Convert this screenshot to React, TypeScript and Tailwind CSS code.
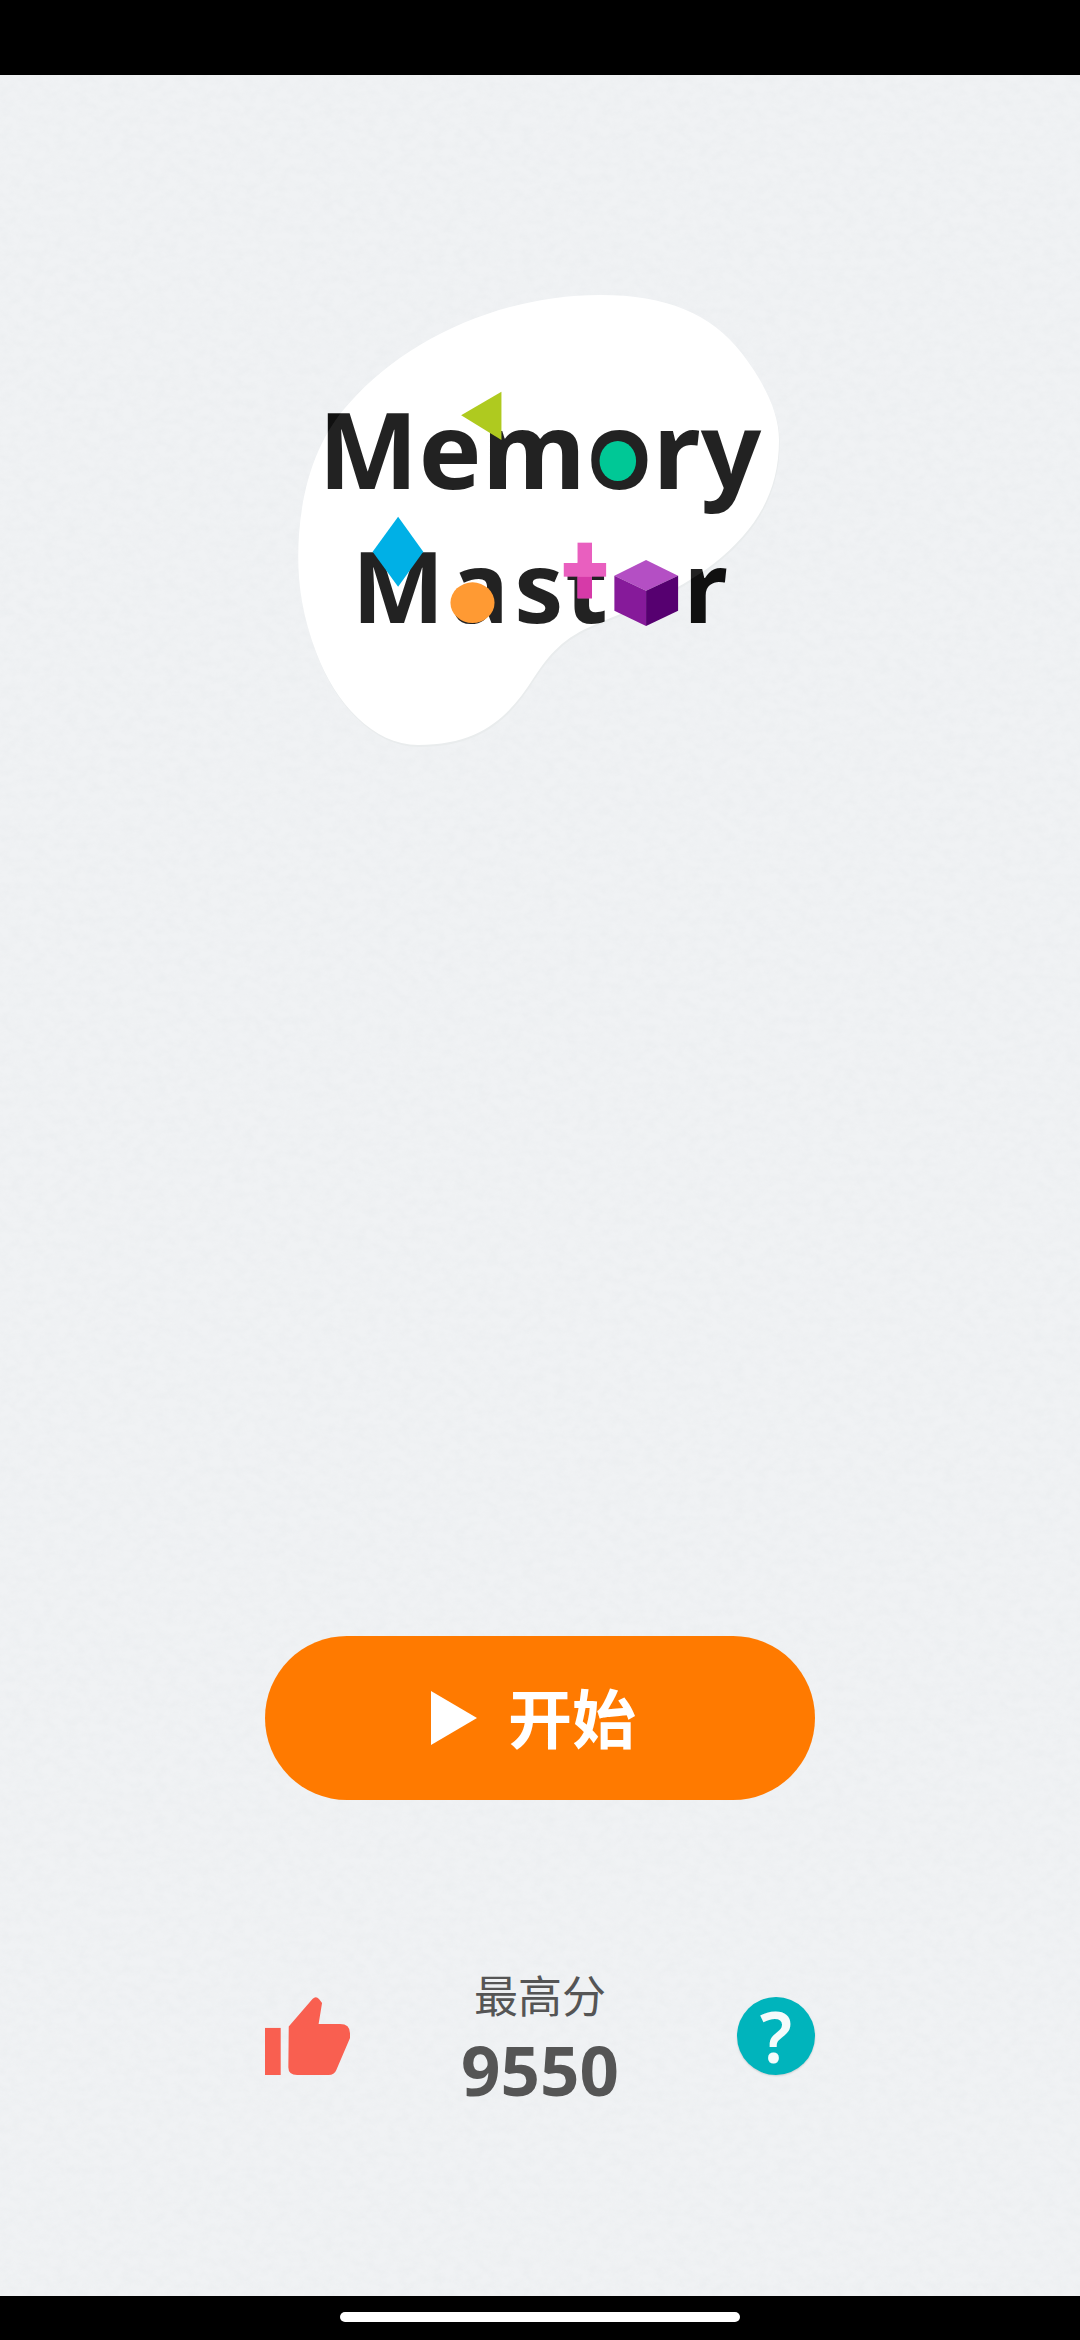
export default function App() {
  const blob =
    "M960,75 C1150,75 1280,130 1370,250 C1440,345 1478,430 1478,510 C1478,670 1410,780 1290,880 C1180,970 1020,1030 930,1070 C840,1110 800,1170 765,1225 C700,1330 620,1425 430,1425 C300,1425 190,1300 135,1150 C95,1040 82,950 82,860 C82,680 130,510 230,400 C400,200 680,75 960,75 Z";
  return (
    <div className="relative flex h-[2340px] w-[1080px] flex-col overflow-hidden bg-black font-['Noto_Sans','Noto_Sans_CJK_SC',sans-serif]">
      <div className="h-[75px] shrink-0 bg-black" />
      <main className="relative flex flex-1 flex-col items-center bg-[#f0f2f4]">
        <svg className="absolute inset-0 h-full w-full" aria-hidden="true">
          <filter id="paper">
            <feTurbulence type="fractalNoise" baseFrequency="0.09 0.12" numOctaves="3" seed="7" />
            <feColorMatrix values="0 0 0 0 0.55  0 0 0 0 0.6  0 0 0 0 0.62  0.6 0 0 0 -0.2" />
          </filter>
          <rect width="100%" height="100%" filter="url(#paper)" opacity="0.25" />
        </svg>

        <div className="relative mt-[195px] h-[500px] w-[540px] shrink-0">
          <svg viewBox="0 0 1568 1500" preserveAspectRatio="none" className="absolute inset-0 h-full w-full">
            <path d={blob} fill="#e9eced" transform="translate(2 6)" />
            <path d={blob} fill="#ffffff" />
          </svg>
          <div className="absolute left-0 top-[116px] w-full text-center text-[106px] font-bold leading-[124px] tracking-[0.5px] text-[#101010]">
            Memory
          </div>
          <div className="absolute left-0 top-[259px] w-full pl-[5px] text-center text-[98px] font-bold leading-[112px] tracking-[5.5px] text-[#101010]">
            Ma<span className="tracking-[2px]">s</span>
            <span className="tracking-[9px]">t</span>
            <span className="text-transparent">o</span>r
          </div>
          <svg viewBox="0 0 1568 1500" preserveAspectRatio="none" className="absolute inset-0 h-full w-full">
            <path d={blob} fill="#ffffff" opacity="0.08" />
            <polygon points="672,365 555,436 672,510" fill="#afca1f" />
            <ellipse cx="1010" cy="573" rx="53" ry="60" fill="#00c896" />
            <polygon points="372,740 445,845 372,950 298,845" fill="#00b0e6" />
            <ellipse cx="588" cy="998" rx="64" ry="61" fill="#ff9a33" />
            <rect x="893" y="818" width="42" height="167" fill="#e95fbf" />
            <rect x="893" y="920" width="42" height="65" fill="#d63aa8" />
            <rect x="853" y="879" width="123" height="41" fill="#e95fbf" />
            <polygon points="1092,870 1185,917 1092,962 1000,917" fill="#b44fc4" />
            <polygon points="1000,917 1092,962 1092,1068 1000,1022" fill="#861a9a" />
            <polygon points="1185,917 1092,962 1092,1068 1185,1022" fill="#560070" />
          </svg>
        </div>

        <button className="relative mt-[866px] flex h-[164px] w-[550px] shrink-0 items-center justify-center gap-[31px] rounded-full bg-[#ff7a00] pr-[13px]">
          <svg viewBox="0 0 46 54" className="h-[54px] w-[46px]">
            <polygon points="0,0 46,27 0,54" fill="#ffffff" />
          </svg>
          <span className="mt-[2px] text-[64px] font-bold leading-[76px] text-white">开始</span>
        </button>

        <div className="relative mt-[171px] flex w-[550px] shrink-0 items-center justify-between">
          <svg viewBox="62 140 222 232" preserveAspectRatio="none" className="mb-[6px] h-[78px] w-[85px]">
            <rect x="62" y="232" width="41" height="140" fill="#f95f50" />
            <path
              d="M124,228 L186,146 Q195,136 203,146 L211,158 L202,220 L258,220 Q284,220 284,248 L284,262 L248,358 Q243,372 228,372 L146,372 Q123,372 123,350 Z"
              fill="#f95f50"
            />
          </svg>
          <div className="flex flex-col items-center">
            <div className="text-[44px] leading-[50px] text-[#555555]">最高分</div>
            <div className="mt-[10px] text-[69px] font-bold leading-[76px] text-[#555555]">9550</div>
          </div>
          <div className="mb-[6px] flex w-[85px] justify-end">
            <div className="flex h-[78px] w-[78px] items-center justify-center rounded-full bg-[#00b4bc] text-[70px] font-semibold leading-none text-[#f4fbfb] shadow-[0_1px_2px_rgba(0,0,0,0.15)]">
              ?
            </div>
          </div>
        </div>
      </main>
      <div className="flex h-[44px] shrink-0 justify-center bg-black pt-[16px]">
        <div className="h-[10px] w-[400px] rounded-full bg-white" />
      </div>
    </div>
  );
}
